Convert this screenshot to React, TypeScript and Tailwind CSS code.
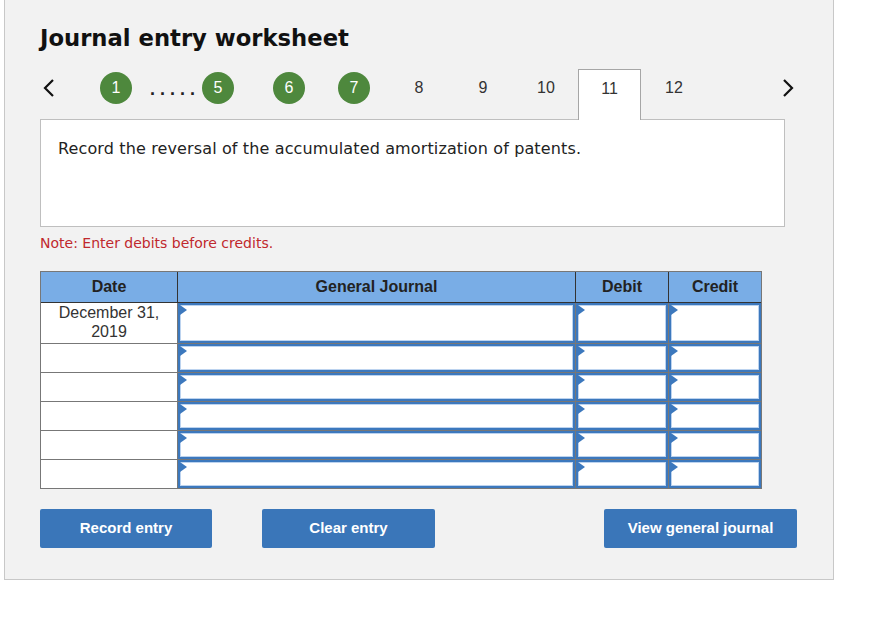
import React from 'react';

const verdana = "font-['DejaVu_Sans',Verdana,sans-serif]";
const arial = "font-['Liberation_Sans',Arial,sans-serif]";

function Circle({ n, className = '' }: { n: number; className?: string }) {
  return (
    <div
      className={`mt-[3px] w-[32px] h-[32px] rounded-full bg-[#4e883d] text-white text-[16px] flex items-center justify-center ${className}`}
    >
      {n}
    </div>
  );
}

function Num({ n, className = '' }: { n: number; className?: string }) {
  return (
    <div className={`mt-[3px] h-[32px] leading-[32px] w-[40px] text-center text-[16px] text-[#333] ${className}`}>{n}</div>
  );
}

function InputCell({ w }: { w: string }) {
  return (
    <div className={`${w} h-full shrink-0`}>
      <div className="relative h-full border-2 border-[#3c78bd] shadow-[inset_1px_1px_0_#bcd3ef,inset_-1px_-1px_0_#bcd3ef] bg-white">
        <div className="absolute left-0 top-0 w-0 h-0 border-y-[5px] border-y-transparent border-l-[7px] border-l-[#3c78bd]" />
      </div>
    </div>
  );
}

function Row({ date, h, first }: { date?: React.ReactNode; h: string; first?: boolean }) {
  return (
    <div className={`flex ${h} ${first ? '' : 'border-t border-[#777]'}`}>
      <div className="w-[137px] shrink-0 bg-white border-r border-[#777] text-center text-[16px] leading-[19px] text-[#333]">
        {date}
      </div>
      <InputCell w="w-[397px]" />
      <div className="w-px bg-[#777] shrink-0" />
      <InputCell w="w-[92px]" />
      <div className="w-px bg-[#777] shrink-0" />
      <InputCell w="w-[92px]" />
    </div>
  );
}

export default function App() {
  return (
    <div className={`w-[873px] h-[617px] bg-white ${arial}`}>
      <div className="ml-[4px] w-[830px] h-[580px] bg-[#f2f2f2] border border-t-0 border-[#c8c8c8] pl-[35px] pt-[24px]">
        <h1 className={`${verdana} font-bold text-[22.7px] leading-[28px] text-[#111]`}>
          Journal entry worksheet
        </h1>

        <div className="flex items-start h-[50px] mt-[17px]">
          <div className="mt-[3px] h-[32px] w-[18px] flex items-center justify-center">
            <svg width="12" height="20" viewBox="0 0 12 20">
              <path d="M10 2 L2 10 L10 18" fill="none" stroke="#111" strokeWidth="2.2" />
            </svg>
          </div>
          <Circle n={1} className="ml-[42px]" />
          <div className="ml-[18px] mt-[3px] h-[32px] leading-[32px] w-[43px] text-[18px] font-bold tracking-[5px] text-[#222] pt-[1px]">
            .....
          </div>
          <Circle n={5} className="ml-[9px]" />
          <Circle n={6} className="ml-[39px]" />
          <Circle n={7} className="ml-[33px]" />
          <Num n={8} className="ml-[29px]" />
          <Num n={9} className="ml-[24px]" />
          <Num n={10} className="ml-[23px]" />
          <div className="ml-[12px] w-[63px] h-[51px] bg-white border border-b-0 border-[#a6a6a6] relative z-10 text-center pt-[3px] text-[16px] leading-[32px] text-[#333]">
            11
          </div>
          <Num n={12} className="ml-[13px]" />
          <div className="ml-[85px] mt-[3px] h-[32px] w-[18px] flex items-center justify-center">
            <svg width="12" height="20" viewBox="0 0 12 20">
              <path d="M2 2 L10 10 L2 18" fill="none" stroke="#111" strokeWidth="2.2" />
            </svg>
          </div>
        </div>

        <div className="w-[745px] h-[108px] bg-white border border-[#bfbfbf] pl-[17px] pt-[17px]">
          <p className={`${verdana} text-[16px] tracking-[0.13px] text-[#222]`}>
            Record the reversal of the accumulated amortization of patents.
          </p>
        </div>

        <p className={`${verdana} text-[14px] text-[#c0282d] mt-[7px] leading-[18px]`}>
          Note: Enter debits before credits.
        </p>

        <div className="mt-[19px] w-[722px] border border-[#777]">
          <div className="flex h-[31px] bg-[#79ade6] border-b border-[#333] text-[16px] font-bold text-[#222]">
            <div className="w-[137px] border-r border-[#333] flex items-center justify-center">Date</div>
            <div className="w-[398px] border-r border-[#333] flex items-center justify-center">General Journal</div>
            <div className="w-[93px] border-r border-[#333] flex items-center justify-center">Debit</div>
            <div className="flex-1 flex items-center justify-center">Credit</div>
          </div>
          <Row first h="h-[40px]" date={<>December 31,<br />2019</>} />
          <Row h="h-[29px]" />
          <Row h="h-[29px]" />
          <Row h="h-[29px]" />
          <Row h="h-[29px]" />
          <Row h="h-[29px]" />
        </div>

        <div className="flex mt-[20px] text-[15px] font-bold text-white">
          <button className="w-[172px] h-[39px] bg-[#3a76b9] rounded-[2px]">Record entry</button>
          <button className="ml-[50px] w-[173px] h-[39px] bg-[#3a76b9] rounded-[2px]">Clear entry</button>
          <button className="ml-[169px] w-[193px] h-[39px] bg-[#3a76b9] rounded-[2px]">View general journal</button>
        </div>
      </div>
    </div>
  );
}
